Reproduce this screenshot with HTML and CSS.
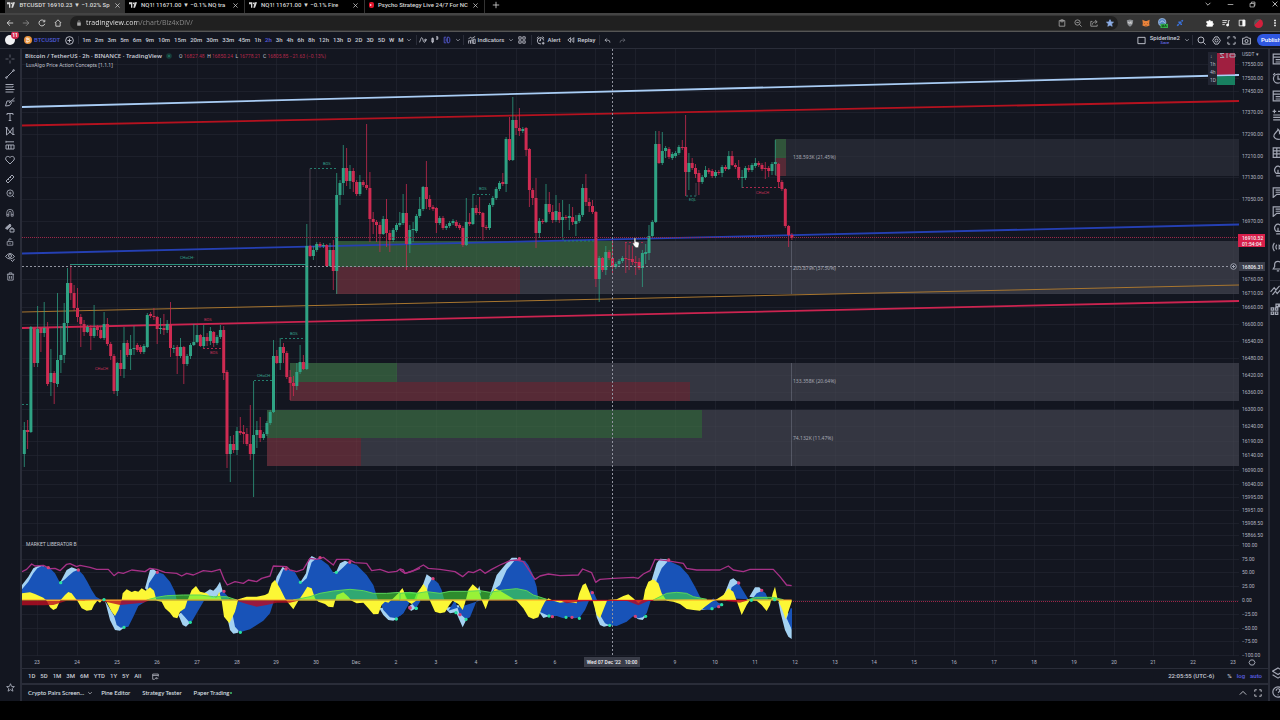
FILE: index.html
```html
<!DOCTYPE html>
<html lang="en">
<head>
<meta charset="utf-8">
<title>BTCUSDT 16910.23 ▼ −1.02% Spiderline2</title>
<link rel="stylesheet" href="styles.css">
</head>
<body>
<svg class="sprite" aria-hidden="true">
  <symbol id="tv" viewBox="0 0 12 10"><path fill="currentColor" stroke="none" d="M0 1h5v8H3V4H0zM8.500 1H12L9 9H6.500z"/><circle cx="7" cy="2.500" r="1.300" fill="currentColor" stroke="none"/></symbol>
  <symbol id="x" viewBox="0 0 10 10"><path d="M2 2l6 6M8 2l-6 6"/></symbol>
  <symbol id="plus" viewBox="0 0 10 10"><path d="M5 1v8M1 5h8"/></symbol>
  <symbol id="back" viewBox="0 0 10 10"><path d="M9 5H1.500M5 1.500L1.500 5 5 8.500"/></symbol>
  <symbol id="fwd" viewBox="0 0 10 10"><path d="M1 5h7.500M5 1.500L8.500 5 5 8.500"/></symbol>
  <symbol id="reload" viewBox="0 0 10 10"><path d="M8.500 6A3.700 3.700 0 1 1 8 2.800M8.500 1v2.500H6"/></symbol>
  <symbol id="home" viewBox="0 0 10 10"><path d="M1 5l4-4 4 4M2.300 4.500V9h5.400V4.500"/></symbol>
  <symbol id="lock" viewBox="0 0 10 10"><path fill="currentColor" d="M2.500 4.500h5V9h-5z"/><path d="M3.500 4V2.500a1.500 1.500 0 0 1 3 0V4"/></symbol>
  <symbol id="chev" viewBox="0 0 10 10"><path d="M2 3.500l3 3 3-3"/></symbol>
  <symbol id="up" viewBox="0 0 10 10"><path d="M1 7l4-4 4 4"/></symbol>
  <symbol id="min" viewBox="0 0 10 10"><path d="M1 5h8"/></symbol>
  <symbol id="restore" viewBox="0 0 10 10"><path d="M1.500 3.500h6v5h-6zM3.500 3.500v-2h5v5h-1"/></symbol>
  <symbol id="clip" viewBox="0 0 10 10"><path d="M1.500 2h7v7h-7zM3.500 1h3v2.500h-3z"/></symbol>
  <symbol id="search" viewBox="0 0 10 10"><circle cx="4.400" cy="4.400" r="3.300"/><path d="M7 7l2.500 2.500"/></symbol>
  <symbol id="zoomout" viewBox="0 0 10 10"><circle cx="4.400" cy="4.400" r="3.300"/><path d="M7 7l2.500 2.500M3 4.400h3"/></symbol>
  <symbol id="share" viewBox="0 0 10 10"><path d="M3 3H1v6h8V7M3 7c0-3 2-3.500 5-3.500M6.500 1.500l2.500 2-2.500 2"/></symbol>
  <symbol id="starfill" viewBox="0 0 10 10"><path fill="currentColor" d="M5 .8l1.200 3 3.100.200-2.400 2 .8 3.100L5 7.400 2.300 9.100l.8-3.100-2.400-2 3.100-.200z"/></symbol>
  <symbol id="star" viewBox="0 0 10 10"><path d="M5 .8l1.200 3 3.100.200-2.400 2 .8 3.100L5 7.400 2.300 9.100l.8-3.100-2.400-2 3.100-.200z"/></symbol>
  <symbol id="shield" viewBox="0 0 10 10"><path fill="#8a8d91" stroke="none" d="M5 .5l4 1.200C9 6 7.500 8.500 5 9.700 2.500 8.500 1 6 1 1.700z"/><path stroke="#ddd" d="M3 3.500v1.500q1 1 2 0V3.500M7 3.500H5.800v2H7V4.500"/></symbol>
  <symbol id="fox" viewBox="0 0 10 10"><path fill="#e8823a" stroke="none" d="M.5 1L4 2.500h2L9.500 1 9 5.500 9.500 8 7 9 5.800 9.500H4.200L3 9 .5 8 1 5.500z"/><path fill="#70402a" stroke="none" d="M2.500 5l1.500.8-1 .6zM7.500 5L6 5.800l1 .6zM4 8h2l-.5 1h-1z"/></symbol>
  <symbol id="globe" viewBox="0 0 12 12"><circle cx="5" cy="5" r="4.500" fill="#5584c4" stroke="#9db9dc"/><path stroke="#c7d8ec" d="M2 6q3-5 6 0"/><path fill="#34b34b" stroke="none" d="M3 7h9v5H3z"/><path stroke="#10431a" d="M5 8v2.500h1.500V8M8 10.800L9 8l1 2.800"/></symbol>
  <symbol id="candy" viewBox="0 0 10 10"><path stroke="#3a73e0" stroke-width="2" d="M1.500 8.500l2-2M4 6l2.500-2.500M7 3l1.500-1.500M3 4h2M5.500 6.500h2"/></symbol>
  <symbol id="puzzle" viewBox="0 0 10 10"><path fill="currentColor" d="M1 3h2.300a1.200 1.200 0 1 1 2.400 0H8v2.200a1.200 1.200 0 1 1 0 2.400V9H1V7.300a1.200 1.200 0 0 0 0-2.400z"/></symbol>
  <symbol id="media" viewBox="0 0 10 10"><path d="M.5 2h6M.5 4.500h5M.5 7h3M8 7.500V2h1.700"/><circle cx="7" cy="7.600" r="1.300" fill="currentColor"/></symbol>
  <symbol id="side" viewBox="0 0 10 10"><path d="M1.500 1.500h7v7h-7z"/><path fill="currentColor" d="M6 1.500h2.500v7H6z"/></symbol>
  <symbol id="dots" viewBox="0 0 10 10"><path stroke="none" fill="currentColor" d="M4 .8h2v2H4zM4 4h2v2H4zM4 7.200h2v2H4z"/></symbol>
  <symbol id="pluso" viewBox="0 0 10 10"><circle cx="5" cy="5" r="4.300"/><path d="M5 2.800v4.400M2.800 5h4.400"/></symbol>
  <symbol id="wave" viewBox="0 0 10 10"><path d="M.5 8C2 6 2 2 3.500 2S5 8 6.500 8 8 5 9.500 4"/><circle cx="8" cy="5" r="1"/></symbol>
  <symbol id="bars" viewBox="0 0 10 10"><path d="M2 2v7M1 3h2v4.500H1zM7.500.5v4M6.500 1h2v3h-2"/></symbol>
  <symbol id="sq" viewBox="0 0 10 10"><path d="M4 1.500H1.500v7H4M5.500 1.500h2l1 2v3l-1 2h-2zM4 3v4"/></symbol>
  <symbol id="indic" viewBox="0 0 10 10"><path d="M.5 9.500V6H3v3.500M3.500 9.500V5H6v4.500M6.500 9.500V4H9v5.500zM.5 4L3 1.500l2 1.500L9 .5"/></symbol>
  <symbol id="grid" viewBox="0 0 10 10"><path d="M1 1h3v3H1zM6 1h3v3H6zM1 6h3v3H1zM6 6h3v3H6z"/></symbol>
  <symbol id="alarm" viewBox="0 0 10 10"><path d="M8.500 5A3.500 3.500 0 1 0 5.500 8.800M1 2.500L2.800.8M9 2.500L7.200.8M5 3v2.300H3.500M8 6.500v3M6.500 8h3"/></symbol>
  <symbol id="replay" viewBox="0 0 10 10"><path d="M4.500 2v6L1 5zM8.500 2v6L5.500 5z"/></symbol>
  <symbol id="undo" viewBox="0 0 10 10"><path d="M4 2L1.500 4.500 4 7M1.500 4.500h4q3 0 3 3.500"/></symbol>
  <symbol id="redo" viewBox="0 0 10 10"><path d="M6 2l2.500 2.500L6 7M8.500 4.500h-4q-3 0-3 3.500"/></symbol>
  <symbol id="box" viewBox="0 0 10 10"><path d="M1 1.500h8v7H1z"/></symbol>
  <symbol id="gear" viewBox="0 0 10 10"><path d="M3.300 1h3.400L9.300 5 6.700 9H3.300L.7 5z"/><circle cx="5" cy="5" r="1.700"/></symbol>
  <symbol id="full" viewBox="0 0 10 10"><path d="M1 3.500V1h2.500M6.500 1H9v2.500M9 6.500V9H6.500M3.500 9H1V6.500"/></symbol>
  <symbol id="cam" viewBox="0 0 10 10"><path d="M.7 2.500h2l1-1.300h2.600l1 1.300h2V9H.7z"/><circle cx="5" cy="5.600" r="1.700"/></symbol>
  <symbol id="cross" viewBox="0 0 10 10"><path d="M5 .5v3M5 6.500v3M.5 5h3M6.500 5h3"/></symbol>
  <symbol id="line" viewBox="0 0 10 10"><path d="M1.500 8.500l7-7"/><circle cx="1.400" cy="8.600" r=".8"/><circle cx="8.600" cy="1.400" r=".8"/></symbol>
  <symbol id="fib" viewBox="0 0 10 10"><path d="M.5 1.500h8M.5 4h7.500M.5 6.500h9M.5 9h8M8.500 4l-1-1"/></symbol>
  <symbol id="brush" viewBox="0 0 10 10"><path d="M.5 9l1.500-5h3.500l1 2-2 2.500zM4 6l5.500-5M7 4h2.500"/></symbol>
  <symbol id="text" viewBox="0 0 10 10"><path d="M2 3V1.500h6V3M5 1.500v7M3.700 8.500h2.600"/></symbol>
  <symbol id="xabcd" viewBox="0 0 10 10"><path d="M1.500 9V1.500L5 6l3-4.500v7L5 6 1.500 9M.5 1.500h2M7.500 8.500h2"/></symbol>
  <symbol id="pred" viewBox="0 0 10 10"><path d="M1 .8v2M1 1.800h8M1 5h8M1 9h8M1 5v4M3.500 5v4M6 5v4M9 5v4"/></symbol>
  <symbol id="heart" viewBox="0 0 10 10"><path d="M5 9L1 5C-.5 2 3 0 5 2.600 7 0 10.500 2 9 5z"/></symbol>
  <symbol id="ruler" viewBox="0 0 10 10"><path d="M1 7l6-6 2 2-6 6zM3 5l1 1M5 3l1 1"/></symbol>
  <symbol id="zoomin" viewBox="0 0 10 10"><circle cx="4.600" cy="4.600" r="3.600"/><path d="M7 7l2 2M3 4.600h3.200M4.600 3v3.200"/></symbol>
  <symbol id="magnet" viewBox="0 0 10 10"><path d="M1 9V4a4 3.500 0 0 1 8 0v5H6.500V4.500a1.500 1.500 0 0 0-3 0V9zM1 7h2.500M6.500 7H9"/></symbol>
  <symbol id="pen" viewBox="0 0 10 10"><path fill="currentColor" d="M.5 5L5 1l1 2-4 3.500z"/><path d="M5 6h4v3H5zM6 6V5h2v1"/></symbol>
  <symbol id="unlock" viewBox="0 0 10 10"><path d="M1.500 4.500h7V9h-7zM3.500 4.500V2.500a1.500 1.500 0 0 1 3 0M5 6v1.500"/></symbol>
  <symbol id="eye" viewBox="0 0 10 10"><path d="M.5 4.500Q5-1.500 9.500 4.500 5 9.500.5 4.500zM6 8l1.500 1.500L9.500 7"/><circle cx="5" cy="4" r="1.500"/></symbol>
  <symbol id="trash" viewBox="0 0 10 10"><path d="M1 2.500h8M3.500 2.500V1h3v1.500M2 2.500V9h6V2.500M4 4.500v3M6 4.500v3"/></symbol>
  <symbol id="list" viewBox="0 0 10 10"><path d="M1 1h8v8H1zM1 3.500h8M3 5.500h5M3 7.500h5"/></symbol>
  <symbol id="clock" viewBox="0 0 10 10"><circle cx="5" cy="5.500" r="3.800"/><path d="M5 3v3h2M1 2.500L2.500 1M9 2.500L7.500 1"/></symbol>
  <symbol id="stack" viewBox="0 0 10 10"><path d="M2 .5v3M.5 2h3M5 2h5M1 5h9M1 7h9M1 9h9"/></symbol>
  <symbol id="fire" viewBox="0 0 10 10"><path d="M5 1C5 3 1.500 4 1.500 7q1 2.500 4 2.500T9 6.500Q9 4 7 3q0 1-.7 1.500Q6.500 2 5 1z"/></symbol>
  <symbol id="cal" viewBox="0 0 10 10"><path d="M1 1.500h9V9.500H1zM1 4h9M1 6.500h9M4 1.500v8M7 1.500v8"/></symbol>
  <symbol id="goto" viewBox="0 0 10 10"><path d="M4 9H1V1.500h8V5M1 3.500h8M9 7.500H5M6.500 6L5 7.500 6.500 9"/></symbol>
  <symbol id="bulb" viewBox="0 0 10 10"><path d="M3.500 7Q1 4.500 3 2T8 3Q8.500 5 7 7zM3.500 9h3.500M5 4v3"/></symbol>
  <symbol id="chat" viewBox="0 0 10 10"><path d="M1 1.500h8.500V7H4L1 9.500zM3 3.500h4.500M3 5.200h4.500"/></symbol>
  <symbol id="cast" viewBox="0 0 10 10"><path d="M2 1.500q-2.500 3.500 0 7M4 3q-1.500 2 0 4M6 3.500L9 5 6 6.500z"/></symbol>
  <symbol id="bell" viewBox="0 0 10 10"><path d="M1 7.500l1.200-2V4a2.800 2.800 0 0 1 5.600 0v1.500l1.200 2zM4 9h2"/></symbol>
  <symbol id="zig" viewBox="0 0 10 10"><path d="M.5 6.500L3.500 3l1.500 2L8 1.500M2 9l2.500-3 1.500 2L9 4.500"/></symbol>
  <symbol id="dom" viewBox="0 0 10 10"><path d="M5 1h2v2H5zM1 4h2v2H1zM4.500 4h2v2h-2zM1 7.500h2v2H1zM4.500 7.500h2v2h-2zM8 .5v3"/></symbol>
  <symbol id="layers" viewBox="0 0 10 10"><path d="M5 .8l4.500 2.700L5 6.200.5 3.500zM.5 6.500L5 9.300l4.500-2.800"/></symbol>
  <symbol id="help" viewBox="0 0 10 10"><circle cx="5" cy="5" r="4.300"/><path d="M3.500 4q0-1.700 1.500-1.700T6.500 4Q6 5 5 5.500M5 7v.8"/></symbol>
</svg>

<nav class="tabs" aria-label="Browser tabs">
  <button class="tab on"><svg class="i8"><use href="#tv"/></svg><span>BTCUSDT 16910.23 ▼ −1.02% Sp</span><svg class="i7"><use href="#x"/></svg></button>
  <button class="tab"><svg class="i8"><use href="#tv"/></svg><span>NQ1! 11671.00 ▼ −0.1% NQ tra</span><svg class="i7"><use href="#x"/></svg></button>
  <button class="tab"><svg class="i8"><use href="#tv"/></svg><span>NQ1! 11671.00 ▼ −0.1% Fire</span><svg class="i7"><use href="#x"/></svg></button>
  <button class="tab"><i class="yt"></i><span>Psycho Strategy Live 24/7 For NC</span><svg class="i7"><use href="#x"/></svg></button>
  <button class="new" aria-label="New tab"><svg class="i8"><use href="#plus"/></svg></button>
  <div class="window">
    <button aria-label="Search tabs"><svg class="i8"><use href="#chev"/></svg></button>
    <button aria-label="Minimize"><svg class="i7"><use href="#min"/></svg></button>
    <button aria-label="Restore"><svg class="i7"><use href="#restore"/></svg></button>
    <button aria-label="Close"><svg class="i8"><use href="#x"/></svg></button>
  </div>
</nav>

<div class="browserbar">
  <button aria-label="Back"><svg class="i8"><use href="#back"/></svg></button>
  <button class="dim" aria-label="Forward"><svg class="i8"><use href="#fwd"/></svg></button>
  <button aria-label="Reload"><svg class="i8"><use href="#reload"/></svg></button>
  <button aria-label="Home"><svg class="i8"><use href="#home"/></svg></button>
  <div class="address">
    <svg class="i6"><use href="#lock"/></svg>
    <input aria-label="Address" value="tradingview.com/chart/Blz4xDiV/">
    <button aria-label="Clipboard"><svg class="i8"><use href="#clip"/></svg></button>
    <button aria-label="Zoom"><svg class="i8"><use href="#zoomout"/></svg></button>
    <button aria-label="Share"><svg class="i8"><use href="#share"/></svg></button>
    <button class="fav" aria-label="Bookmark"><svg class="i8"><use href="#starfill"/></svg></button>
  </div>
  <div class="ext">
    <svg class="i8"><use href="#shield"/></svg><svg class="i8"><use href="#fox"/></svg><svg class="i10"><use href="#globe"/></svg><svg class="i8"><use href="#candy"/></svg>
  </div>
  <div class="ext white">
    <svg class="i8"><use href="#puzzle"/></svg><svg class="i8"><use href="#media"/></svg><svg class="i8"><use href="#side"/></svg><i class="me"></i><svg class="i8"><use href="#dots"/></svg>
  </div>
</div>

<header class="top">
  <button class="avatar" aria-label="Account"><b>11</b></button>
  <button class="symbol"><i>₿</i>BTCUSDT</button>
  <button aria-label="Compare"><svg class="i9"><use href="#pluso"/></svg></button>
  <div class="times">
    <button>1m</button><button>2m</button><button>3m</button><button>5m</button><button>6m</button><button>9m</button><button>10m</button><button>15m</button><button>20m</button><button>30m</button><button>33m</button><button>45m</button><button>1h</button><button class="blue">2h</button><button>3h</button><button>4h</button><button>6h</button><button>8h</button><button>12h</button><button>13h</button><button>D</button><button>2D</button><button>3D</button><button>5D</button><button>W</button><button>M</button><button aria-label="More intervals"><svg class="i6"><use href="#chev"/></svg></button>
  </div>
  <div class="group styles">
    <button aria-label="Line"><svg class="i8"><use href="#wave"/></svg></button><button aria-label="Candles"><svg class="i8"><use href="#bars"/></svg></button><button class="blue" aria-label="Hollow"><svg class="i8"><use href="#sq"/></svg></button><button aria-label="More styles"><svg class="i6"><use href="#chev"/></svg></button>
  </div>
  <div class="group indicators">
    <button><svg class="i8"><use href="#indic"/></svg>Indicators</button><button aria-label="Favorites"><svg class="i6"><use href="#chev"/></svg></button><button aria-label="Templates"><svg class="i8"><use href="#grid"/></svg></button>
  </div>
  <div class="group alerts">
    <button><svg class="i9"><use href="#alarm"/></svg>Alert</button><button><svg class="i8"><use href="#replay"/></svg>Replay</button>
  </div>
  <div class="group history">
    <button aria-label="Undo"><svg class="i7"><use href="#undo"/></svg></button><button class="dim" aria-label="Redo"><svg class="i7"><use href="#redo"/></svg></button>
  </div>
  <div class="right">
    <button aria-label="Layout"><svg class="i9"><use href="#box"/></svg></button>
    <button class="save"><b>Spiderline2</b><small>Save</small></button>
    <button aria-label="Layouts"><svg class="i6"><use href="#chev"/></svg></button>
  </div>
  <div class="group tools">
    <button aria-label="Search"><svg class="i9"><use href="#search"/></svg></button><button aria-label="Settings"><svg class="i9"><use href="#gear"/></svg></button><button aria-label="Fullscreen"><svg class="i9"><use href="#full"/></svg></button><button aria-label="Snapshot"><svg class="i9"><use href="#cam"/></svg></button>
  </div>
  <button class="publish">Publish</button>
</header>

<main>
  <aside class="draw" aria-label="Drawing tools">
    <div class="set eight"><button aria-label="Cursor"><svg class="i10 dim"><use href="#cross"/></svg></button><button aria-label="Trend line"><svg class="i10"><use href="#line"/></svg></button><button aria-label="Fib"><svg class="i10"><use href="#fib"/></svg></button><button aria-label="Brush"><svg class="i10"><use href="#brush"/></svg></button><button aria-label="Text"><svg class="i10"><use href="#text"/></svg></button><button aria-label="Patterns"><svg class="i10"><use href="#xabcd"/></svg></button><button aria-label="Forecast"><svg class="i10"><use href="#pred"/></svg></button><button aria-label="Icons"><svg class="i10"><use href="#heart"/></svg></button></div>
    <div class="set two"><button aria-label="Measure"><svg class="i10"><use href="#ruler"/></svg></button><button aria-label="Zoom in"><svg class="i9"><use href="#zoomin"/></svg></button></div>
    <div class="set four"><button aria-label="Magnet"><svg class="i8"><use href="#magnet"/></svg></button><button aria-label="Stay in drawing mode"><svg class="i10"><use href="#pen"/></svg></button><button aria-label="Lock"><svg class="i8"><use href="#unlock"/></svg></button><button aria-label="Hide"><svg class="i10"><use href="#eye"/></svg></button></div>
    <div class="set"><button aria-label="Delete"><svg class="i9"><use href="#trash"/></svg></button></div>
    <button class="foot" aria-label="Favorites"><svg class="i9"><use href="#star"/></svg></button>
  </aside>

  <section class="center">
    <svg class="chart" viewBox="22 49 1246 619" preserveAspectRatio="xMinYMin meet" role="img" aria-label="Bitcoin price chart">
      <g id="gridlines" class="gridlines"></g>
      <g class="zones">
        <path class="za" d="M775 139h464v37H775z"/><path class="zg" d="M336 241h276v26H336zM290 363h107v19H290zM267 410h435v28H267zM775 139h11v19h-11z"/>
        <path class="zb" d="M612 241h627v53H520v-27h92zM397 363h842v38H690v-19H397zM702 410h537v56H361v-28h341z"/>
        <path class="zr" d="M336 267h184v27H336zM290 382h400v19H290zM267 438h94v28h-94zM775 158h11v18h-11z"/>
        <path class="zl" d="M791.500 241v53M791.500 363v38M791.500 410v56"/>
      </g>
      <g id="gridover" class="gridover"></g>
      <g class="lines">
        <path stroke="#a9cdf5" d="M22 107L1239 75"/>
        <path stroke="#b5121f" d="M22 125.500L1239 101"/>
        <path stroke="#2540b4" d="M22 253.500L1239 224.500"/>
        <path class="fine" stroke="#a8762f" d="M22 312L1239 285"/>
        <path stroke="#cc2450" d="M22 328L1239 301"/>
        <path class="fine" stroke="#2a8f7d" d="M70 264.500H306"/>
      </g>
      <g class="dash">
        <path class="g" d="M310 168.500h27M473 194.500h17M254 380.500h18M281 338.500h22M563 238v3h32M686 196h11M22 404.500h6"/>
        <path class="r" d="M742 187.500h40M203 348.500h20M625 242.500h20"/>
        <path class="thin" d="M310 168.500V246M686 147v49M696 183v13"/>
      </g>
      <g id="candles"></g>
      <g class="tags"><text x="180" y="259" class="g">CHoCH-</text><text x="257" y="377" class="g">CHoCH</text><text x="290" y="335" class="g">BOS</text><text x="323" y="165" class="g">BOS</text><text x="479" y="190" class="g">BOS</text><text x="689" y="201" class="g">EQL</text><text x="204" y="321" class="r">BOS</text><text x="210" y="354" class="r">BOS</text><text x="95" y="370" class="r">CHoCH</text><text x="756" y="194" class="r">CHoCH</text></g>
      <path class="now" d="M22 237.500H1239M791 601.500H1239"/>
      <g class="vol"><text x="793" y="159">138.593K (21.45%)</text><text x="793" y="270">203.879K (37.50%)</text><text x="793" y="383">133.358K (20.64%)</text><text x="793" y="440">74.132K (11.47%)</text></g>

      <g transform="translate(0 530) scale(.33333)" class="osc">
        <path class="lb" d="M66 210V165L85 140 100 115 115 107 130 108 180 158 200 120 215 112 237 120 270 210zM315 212L330 270 345 300 360 302 374 292 350 270zM435 175L450 120 460 117 472 127 470 210zM535 255L548 285 558 290 572 277 550 240zM612 190L630 178 640 182 650 172 660 155 670 190V210H612zM678 245L690 300 700 311 714 308 720 290 712 230zM815 190L830 140 848 110 860 120 900 158 918 130 925 90 935 78 948 85 960 130 1008 127 1020 100 1035 92 1050 98 1000 200H815zM1138 235L1150 255 1165 270 1180 272 1192 265 1160 230zM1225 230L1233 243 1248 235 1240 220z"/>
        <path class="db" d="M66 210V178L85 155 100 130 112 115 125 108 150 115 165 130 180 158 195 148 205 138 220 125 235 119 250 135 262 155 275 180 288 200 305 210zM320 212L340 250 350 285 362 293 385 290 400 260 415 228 440 212zM437 210L447 160 470 125 490 132 510 155 525 185 530 210zM555 212L540 245 555 262 568 277 577 272 590 250 612 212zM640 210L655 192 668 183 680 195 690 210zM715 213L698 255 705 290 720 307 750 298 790 272 810 250 822 212zM820 210L835 155 850 118 870 120 885 127 895 145 905 158 920 145 935 97 950 85 965 90 985 105 1000 128 1010 130 1030 112 1045 97 1070 105 1100 135 1120 165 1134 210zM1140 212L1150 240 1170 262 1190 265 1210 250 1228 212zM1228 212L1248 235 1262 212z"/>
        <path class="y" d="M66 210V190L90 187 105 192 130 203 140 212 150 232 160 240 170 235 180 212 195 195 205 186 215 190 225 203 232 212 245 235 260 242 275 240 282 225 292 212 300 218 310 206 318 212 335 245 345 258 355 240 365 210 368 190 380 178 395 186 405 182 415 185 425 175 437 182 450 172 462 182 470 212 485 215 495 235 510 248 520 262 532 265 540 245 555 235 562 212 575 180 588 168 600 185 620 190 635 205 650 202 658 185 665 212 672 260 688 280 705 245 715 208 740 200 770 200 795 195 805 190 815 160 825 150 840 175 855 205 862 215 880 238 895 212 910 190 922 170 935 175 945 205 955 215 975 222 985 230 1000 232 1010 195 1030 187 1045 200 1055 212 1070 220 1090 218 1105 235 1120 253 1135 252 1145 225 1155 215 1165 218 1180 205 1195 190 1207 175 1218 200 1230 220 1240 215 1250 190 1260 178V210z"/>
        <path class="gr" d="M440 210L470 202 500 197 550 195 600 195 640 200 680 200 710 210zM880 210L930 200 960 190 1000 183 1050 178 1090 182 1120 190 1160 190 1200 187 1260 190V210z"/>
        <path class="rd" d="M66 212V226H130L160 225 200 212 250 210 300 212 330 218 360 225 430 218 450 211zM710 212L740 222 770 230 800 225 830 218 870 218 900 211z"/>
        <path class="zero" d="M66 210H1260"/>
        <path class="pu" d="M66 125L80 118 95 102 105 108 130 106 150 116 165 115 180 122 200 103 210 101 230 110 240 106 270 112 290 118 325 118 342 137 355 127 370 130 395 120 435 125 450 115 470 118 495 127 530 130 545 138 560 130 580 135 610 122 635 125 660 118 672 148 682 165 705 155 730 160 745 150 770 155 785 145 810 138 820 108 860 110 870 120 890 125 910 118 930 85 950 88 970 82 1000 105 1010 88 1045 88 1065 98 1100 100 1115 122 1140 118 1165 127 1190 124 1200 117 1210 120 1215 130 1230 126 1260 115"/>
        <path class="dg" d="M182 158h.1M372 292h.1M571 277h.1M721 307h.1M901 157h.1M1009 127h.1M1189 267h.1M1249 235h.1M312 209h.1"/>
        <path class="dr" d="M145 113h.1M235 120h.1M472 127h.1M672 184h.1M858 117h.1M960 83h.1M1049 97h.1M1230 234h.1"/>
      </g>
      <g transform="translate(400 530) scale(.33333)" class="osc">
        <path class="lb" d="M65 175L80 133 97 145 95 210H60zM135 235L150 250 168 247 188 292 200 267 175 225zM228 190L238 168 243 190zM268 200L278 170 290 135 315 105 335 83 350 83 360 100 330 150 300 210zM415 235L420 250 430 264 449 258 440 230zM585 235L590 262 600 285 612 290 630 286 610 240zM750 210L755 150 770 100 780 86 800 88 810 110 790 200zM700 258L715 268 728 270 738 258zM900 225L905 240 938 235zM970 200L990 150 1000 145 1017 158 1000 200zM1048 200L1065 172 1078 172 1087 182 1070 205zM1135 215L1142 250 1155 300 1165 320 1175 327V290L1160 230z"/>
        <path class="db" d="M0 212V258L10 250 25 225 30 212zM75 210L85 165 97 145 115 160 125 180 133 210zM145 242L165 210 178 250 198 267 210 262 225 225 240 185 245 210zM265 210L280 180 300 165 320 120 345 90 375 92 385 105 397 130 410 170 415 210zM430 212L418 245 447 258 470 258 490 265 500 260 525 265 540 262 555 240 567 212zM565 210L572 180 583 192 592 212zM620 212L600 255 615 280 628 286 650 288 680 275 700 258 715 265 728 262 740 250 752 212zM760 210L770 150 785 115 805 92 840 108 865 135 885 170 900 200 905 210zM905 238L940 205 955 218 970 224 930 240zM985 205L995 172 1015 158 1025 175 1045 208zM1055 210L1070 190 1087 182 1097 190 1105 210zM1160 265L1172 235 1176 235V300z"/>
        <path class="y" d="M0 210V185L8 175 20 212 35 222 48 212 58 180 70 162 80 175 90 212 105 245 120 250 135 247 148 225 158 212 175 222 188 240 195 220 205 180 218 163 235 178 245 210 257 238 270 200 285 175 300 182 330 200 350 212 370 235 385 260 400 267 415 262 425 235 435 215 445 205 460 212 480 218 500 215 530 220 538 190 548 165 557 160 568 185 578 212 590 255 600 265 612 235 622 210 650 208 670 198 685 193 700 205 715 220 730 208 735 180 745 155 760 148 775 160 785 190 800 212 820 215 840 222 860 237 880 240 900 242 915 230 935 215 950 208 970 195 985 175 1000 185 1010 212 1025 255 1040 225 1050 210 1070 212 1085 225 1100 243 1110 225 1118 190 1125 170 1132 205 1145 235 1157 268 1165 245 1175 215V210z"/>
        <path class="gr" d="M0 210V190L30 187 50 190 80 185 120 190 150 184 200 184 240 182 270 187 310 180 350 176 380 182 400 195 440 208zM760 210L780 200 800 190 830 187 860 190 880 200 920 208zM1040 210L1070 202 1120 202 1150 209z"/>
        <path class="rd" d="M430 211H480L500 220 550 214 680 212 715 226 750 211zM960 211L1020 218 1045 211z"/>
        <path class="zero" d="M0 210H440M760 210H980M1040 210H1175"/><path class="zero red" d="M440 211H760M980 211H1040"/>
        <path class="pu" d="M0 120L15 130 40 122 70 105 85 115 120 118 165 125 188 140 205 125 220 128 240 118 255 130 275 118 300 105 330 92 350 90 370 95 390 125 405 148 420 138 445 132 480 137 535 135 548 117 575 128 587 157 600 148 640 145 700 142 715 145 730 132 750 122 765 88 800 92 850 100 860 115 890 120 960 120 985 108 1000 120 1030 125 1050 118 1120 118 1140 140 1160 165 1175 167"/>
        <path class="dg" d="M48 235h.1M168 248h.1M198 268h.1M447 258h.1M498 262h.1M538 265h.1M629 286h.1M737 259h.1M936 236h.1M965 224h.1M1054 211h.1M1124 209h.1"/>
        <path class="dr" d="M30 233h.1M99 146h.1M180 254h.1M358 86h.1M457 260h.1M516 262h.1M577 188h.1M706 259h.1M806 90h.1M956 230h.1M1016 159h.1M1085 181h.1"/>
      </g>

      <path class="hair" d="M22 266.500H1230M612.500 49V656"/>
      <g class="legend">
        <text x="25" y="58" class="ttl">Bitcoin / TetherUS · 2h · BINANCE · TradingView</text>
        <circle cx="169" cy="56" r="1.800"/>
        <text x="179" y="58" class="ohlc">O <tspan>16827.48</tspan>&#160; H <tspan>16850.24</tspan>&#160; L <tspan>16778.21</tspan>&#160; C <tspan>16805.85 −21.63 (−0.13%)</tspan></text>
        <text x="26" y="67" class="sub">LuxAlgo Price Action Concepts [1.1.1]</text>
        <text x="26" y="546" class="mk">MARKET LIBERATOR B</text>
      </g>
      <g class="mini"><path fill="#222532" d="M1208 52h9v33h-9z"/><path fill="#a01f40" d="M1217 53h18v22h-18z"/><path fill="#188060" d="M1217 76h18v9h-18z"/><path d="M1217 75.500L1239 75" stroke="#a9cdf5" stroke-width="1.500"/><text x="1210" y="58">↓</text><text x="1210" y="66">1h</text><text x="1210" y="74">4h</text><text x="1210" y="82">1D</text><path class="ic" d="M1220 53.500h4M1220 57.500h4M1220 53.500l4 4M1230 57v-3h5v3zM1227 53v5"/></g>
      <g id="prices" class="axis"></g>
      <text x="1242" y="56" class="cur">USDT ▾</text>
      <path fill="#d81f4a" d="M1238 234h27v13h-27z"/><text class="flag" x="1242" y="240">16910.52</text><text class="flag" x="1242" y="246">01:54:04</text>
      <path fill="#3a3d49" d="M1239 262h26v9h-26z"/><text class="flag" x="1242" y="269">16806.31</text>
      <g class="ic"><circle cx="1233.500" cy="266.500" r="2.800" fill="#222532"/><path d="M1232 266.500h3M1233.500 265v3"/><path d="M1250.500 660h3l1.500 2.500-1.500 2.500h-3l-1.500-2.500z"/></g>
      <g id="days" class="axis mid"></g>
      <path fill="#3a3d49" d="M584 657h56v10h-56z"/><text class="flag mid" x="612" y="664">Wed 07 Dec '22&#160;&#160; 10:00</text>
      <path class="hand" d="M634.500 246.500l-2-3q.5-1.200 1.600-.2v-5q.9-1.300 1.700 0v3.200l2.900.8q.7.500.3 2.200l-.6 3q-2.500 1-3.900-1z"/>
    </svg>

    <div class="range">
      <button>1D</button><button>5D</button><button>1M</button><button>3M</button><button>6M</button><button>YTD</button><button>1Y</button><button>5Y</button><button>All</button>
      <button class="goto" aria-label="Go to date"><svg class="i7"><use href="#goto"/></svg></button>
      <button class="utc">22:05:55 (UTC-6)</button>
      <button class="pct">%</button><button class="blue">log</button><button class="blue">auto</button>
    </div>
    <div class="panels">
      <button>Crypto Pairs Screen...</button><button class="pc" aria-label="Screeners"><svg class="i6"><use href="#chev"/></svg></button><button>Pine Editor</button><button>Strategy Tester</button><button>Paper Trading<i></i></button>
      <button class="end" aria-label="Open panel"><svg class="i8"><use href="#up"/></svg></button><button class="mx" aria-label="Maximize"><svg class="i8"><use href="#full"/></svg></button>
    </div>
  </section>

  <aside class="widgets" aria-label="Widgets">
    <div class="rows"><svg class="i12"><use href="#list"/></svg><svg class="i12"><use href="#clock"/></svg><svg class="i12"><use href="#list"/></svg><svg class="i12"><use href="#stack"/></svg><svg class="i12"><use href="#fire"/></svg><svg class="i12"><use href="#cal"/></svg><svg class="i12"><use href="#bulb"/></svg></div>
    <div class="rows b"><svg class="i12"><use href="#chat"/></svg><svg class="i12"><use href="#chat"/></svg><svg class="i12"><use href="#bulb"/></svg><svg class="i12"><use href="#cast"/></svg><svg class="i12"><use href="#bell"/></svg></div>
    <div class="rows c"><svg class="i12"><use href="#zig"/></svg><svg class="i12"><use href="#dom"/></svg></div>
    <div class="rows end"><svg class="i12"><use href="#layers"/></svg><svg class="i12"><use href="#help"/></svg></div>
  </aside>
</main>
<script src="chart.js"></script>
</body>
</html>
```
FILE: styles.css
```css
* { box-sizing: border-box; }
body { margin: 0; height: 100vh; display: flex; flex-direction: column; background: #000; color: #c9ccd6; font: 500 6px/8px Roboto, sans-serif; overflow: hidden; padding-bottom: 19px; }
button { all: unset; display: inline-flex; align-items: center; justify-content: center; white-space: nowrap; cursor: pointer; flex: none; }
svg { flex: none; }
.sprite { position: absolute; width: 0; height: 0; }
symbol { fill: none; stroke: currentColor; }
.i6, .i7, .i8, .i9, .i10, .i12 { fill: none; stroke: currentColor; }
.i6 { width: 6px; height: 6px; }
.i7 { width: 7px; height: 7px; }
.i8 { width: 8px; height: 8px; }
.i9 { width: 9px; height: 9px; }
.i10 { width: 10px; height: 10px; }
.i12 { width: 12px; height: 12px; }
.dim { opacity: .5; }
.blue { color: #5a5fe0; }

.tabs { display: flex; height: 13px; flex: none; padding-left: 5px; color: #dadada; }
.tab { width: 120px; padding: 0 5px 3px 4px; gap: 4px; border-right: 1px solid #333; box-sizing: border-box; }
.tab.on { background: #353535; }
.tab span { flex: 1; }
.yt { width: 8px; height: 6px; border-radius: 2px; background: #e3142c; display: grid; place-items: center; }
.yt::after { content: ""; border: 1px solid transparent; border-left: 2px solid #fff; margin-left: 1px; }
.new { padding: 0 7px 3px; }
.window { margin-left: auto; display: flex; gap: 15px; padding: 0 1px 5px 0; }

.browserbar { display: flex; align-items: center; height: 19px; flex: none; background: #353535; border-top: 2px solid #444; border-bottom: 1px solid #555; padding: 0 1px 0 6px; gap: 8px; color: #e8e8e8; }
.address { flex: 1; display: flex; align-items: center; gap: 8px; height: 14px; background: #202020; border-radius: 7px; padding: 0 4px 0 6px; color: #aaa; }
.address svg.i6 { margin-right: -4px; }
.address input { flex: 1; min-width: 0; border: 0; outline: 0; padding: 0; font: 7px/10px "Open Sans", sans-serif; color: transparent; background: linear-gradient(90deg, #f2f2f2 52px, #8e8e8e 52px); -webkit-background-clip: text; background-clip: text; }
.address .fav { color: #8fb0e8; }
.ext { display: flex; align-items: center; gap: 8px; }
.ext.white { margin-left: 14px; color: #fff; }
.me { width: 9px; height: 9px; border-radius: 50%; background: linear-gradient(135deg, #555 35%, #d3203c 35%); }

.top { display: flex; align-items: center; height: 17px; flex: none; background: #131620; border-bottom: 1px solid #2a2d39; padding-left: 5px; overflow: hidden; }
.avatar { position: relative; width: 10px; height: 10px; border-radius: 50%; background: #f2f2f4; margin-right: 9px; }
.avatar b { position: absolute; left: 6px; top: -4px; width: 8px; height: 8px; border-radius: 50%; background: #d5294d; color: #fff; font-size: 5px; text-align: center; }
.symbol { color: #4c5ad8; gap: 2px; margin-right: 5px; }
.symbol i { width: 8px; height: 8px; border-radius: 50%; background: #e8923a; color: #fff; font-style: normal; text-align: center; }
.times { display: flex; border-left: 1px solid #2a2d39; margin-left: 4px; padding: 0 4px 0 3px; gap: 4px; }
.times button:last-child { margin-left: -2px; }
.group { display: flex; align-items: center; border-left: 1px solid #2a2d39; padding: 0 4px; height: 10px; }
.group button { gap: 2px; }
.styles { gap: 4px; padding: 0 2px; }
.indicators { gap: 4px; padding: 0 5px 0 4px; }
.alerts { gap: 7px; padding: 0 4px; }
.history { gap: 8px; }
.right { margin-left: auto; display: flex; align-items: center; gap: 4px; padding-right: 2px; }
.save { flex-direction: column; line-height: 6px; }
.save b { font-weight: 500; }
.save small { font-size: 4px; line-height: 4px; color: #6468e6; }
.tools { gap: 6px; padding: 0 6px 0 4px; }
.publish { width: 23px; height: 12px; box-sizing: border-box; background: #2f57e0; color: #fff; border-radius: 6px 0 0 6px; justify-content: flex-start; padding-left: 4px; overflow: hidden; }

main { flex: 1; min-height: 0; display: grid; grid-template-columns: 22px minmax(0, 1fr) 12px; background: #131620; }
.draw { display: flex; flex-direction: column; gap: 5px; border-right: 2px solid #2a2d39; padding: 3px 0 9px; color: #a3a7b4; }
.set { display: grid; grid-auto-rows: 1fr; min-height: 14px; }
.eight { height: 115px; }
.two { height: 29px; }
.four { height: 58px; }
.foot { margin-top: auto; }
.center { display: flex; flex-direction: column; min-width: 0; min-height: 0; }
.chart { flex: 1; min-height: 0; width: 100%; display: block; font: 5px Roboto, sans-serif; }
.range, .panels { display: flex; align-items: center; flex: none; }
.range { height: 17px; border-top: 1px solid #2a2d39; border-bottom: 2px solid #2a2d39; padding: 0 6px; gap: 5px; }
.goto { margin-left: 6px; }
.utc { margin-left: auto; }
.pct { margin-left: 8px; }
.panels { height: 16px; padding: 0 6px; font-family: Lato, sans-serif; color: #dfe1e8; }
.panels button + button { margin-left: 12px; }
.panels button.pc { margin: 0 -4px 0 3px; }
.panels i { width: 2px; height: 2px; border-radius: 50%; background: #45c06a; margin-left: 1px; }
.panels button.end { margin-left: auto; }
.panels button.mx { margin-left: 7px; }
.widgets { display: flex; flex-direction: column; border-left: 2px solid #2a2d39; overflow: hidden; padding: 1px 0 0 2px; color: #a3a7b4; }
.rows { display: grid; height: 130px; align-items: center; grid-auto-rows: 1fr; }
.rows.b { height: 92px; margin-top: 3px; }
.rows.c { height: 38px; margin: 5px 0 0 -2px; border-top: 1px solid #2a2d39; }
.rows.end { height: 38px; margin-top: auto; }

.gridlines path, .gridover path { stroke: #191c27; fill: none; }
.gridover path { stroke: #fff; opacity: .02; }
.za { fill: #242732; }
.zb { fill: #343641; }
.zg { fill: #30543a; }
.zr { fill: #562a36; }
.zl { stroke: #545764; fill: none; stroke-width: 1; }
.lines path { fill: none; stroke-width: 1.800; }
.lines .fine { stroke-width: 1; }
.dash path { fill: none; stroke-width: 1; stroke-dasharray: 2 2; }
.dash .g { stroke: #237e6e; }
.dash .r { stroke: #a8284c; }
.dash .thin { stroke: #4d3f4c; stroke-dasharray: none; }
.up { stroke: #2fa384; }
.down { stroke: #cf2b52; }
.up, .down { fill: none; }
.wick { stroke-width: 1; opacity: .75; }
.stick { stroke-width: 3; }
.tags text { font-size: 4px; }
.tags .g { fill: #35a38d; }
.tags .r { fill: #c73258; }
.now { stroke: #9c2748; stroke-width: 1; stroke-dasharray: 1 1; fill: none; }
.vol text { fill: #a6a8b2; font-family: "Noto Sans", sans-serif; }
.lb { fill: #a4d2f2; }
.db { fill: #1853b8; }
.y { fill: #fcf735; }
.gr { fill: #46ef38; fill-opacity: .55; stroke: #58d659; stroke-width: 3; }
.rd { fill: #b90d22; fill-opacity: .8; }
.osc path { stroke-linejoin: round; }
.zero { stroke: #ffa025; stroke-width: 3; fill: none; }
.zero.red { stroke: #d31528; }
.pu { fill: none; stroke: #a63187; stroke-width: 4; }
.dg, .dr { stroke-width: 10; stroke-linecap: round; }
.dg { stroke: #29e0a1; }
.dr { stroke: #d3417c; }
.hair { stroke: #9194a0; stroke-width: 1; stroke-dasharray: 2 2; fill: none; }
.legend text { fill: #c5c8d3; }
.legend circle { fill: #26a483; stroke: #173f3b; stroke-width: 2; }
.legend .ttl { font: 600 6px "Noto Sans", sans-serif; }
.legend .ohlc { font-size: 5px; }
.legend tspan { fill: #b3284b; }
.legend .sub { font: 5px "Noto Sans", sans-serif; }
.mini text { font-size: 5px; fill: #b6b9c5; }
.ic { stroke: #a3a7b4; fill: none; stroke-width: 1; }
.axis text, .cur { fill: #b4b7c3; }
.flag { fill: #f0f1f5; font-weight: 500; }
.mid { text-anchor: middle; }
.hand { fill: #fff; stroke: #222; stroke-width: .5; }
```
FILE: chart.js
```js
// Two-hour candles, one step of 3.323 units each: open, close [, high, low] as vertical positions.
const candles = `454,430,422,467 430,432,420,449 432,327,326,433 328,363,327,367 363,329,306,367 328,333,327,352 333,328,302,337 328,384,322,386 382,373,349,396 373,383,371,404
384,360,293,387 360,355,326,373 355,323,303,363 323,283,268,342 283,293,265,300 293,308,285,311 308,317,288,322 317,324,314,347 324,332,320,336 332,327,325,333
328,336,325,350 336,328,305,338 327,330,325,336 330,338,326,339 338,324,312,340 324,344,318,346 344,356,342,360 356,391,354,394 391,363,362,396 363,369,350,376
369,343,327,378 343,355,340,357 355,349,335,370 349,348,326,355 345,350,343,352 347,352 352,346 347,315,313,348 314,316 316,317,308,320
317,329,316,344 329,328,318,334 328,330,314,335 330,324,320,333 324,348,302,357 349,348,345,353 347,356,345,374 356,347,338,358 347,364,346,384 364,356
356,345,343,359 345,342,324,346 342,335,325,343 335,346,334,347 346,337,325,348 337,341,333,346 341,331,327,345 332,343,331,347 343,337 337,330,325,339
330,373,326,380 372,454,370,468 454,444,436,482 444,450,435,453 450,431,427,455 431,433,417,435 432,434,425,444 434,444,428,446 444,454,405,460 454,435,381,497
435,430,421,448 430,438,417,442 438,434 434,423 423,412 412,356,340,413 356,363,350,364 363,347,338,370 347,353,343,363 353,377,351,379
377,383,370,400 383,386,376,396 386,372,363,390 372,362,345,374 362,369,355,370 369,246,224,370 246,256,245,257 256,250,246,260 250,244 244,246
246,245 245,266,244,267 266,250,243,267 250,271,240,290 271,195,173,294 195,183,180,205 183,168,145,195 168,181,148,186 181,171,165,189 171,182,168,192
182,194 194,182,175,196 182,185 185,188,124,190 188,219,172,242 219,222,212,234 222,225,220,242 225,234,222,252 234,219,216,235 219,233,199,247
233,240,230,252 240,230 230,225 225,223,212,227 223,213,194,225 213,244,184,270 244,230,225,253 230,229,222,242 231,216 216,209,197,218
209,187,186,211 187,199,161,209 199,207,195,210 207,209 208,223,207,233 223,218 218,228 228,226 226,223 223,221
222,226 225,228 228,245,226,247 245,222,198,246 222,224,213,226 224,208,194,225 208,213,205,215 212,213,197,215 213,227,212,240 227,228
228,205 205,198 198,189 189,183 182,184,173,186 184,139,137,192 139,160,117,161 160,120,97,161 120,128,116,135 128,131,108,136
131,129 128,150,127,156 149,190,148,207 190,198,188,205 198,233,178,248 233,221,218,238 221,222 222,204,184,223 204,212,192,214 212,220,205,223
220,211,195,222 212,220,203,223 220,217,200,238 217,218 218,216,204,230 217,222,207,225 224,221,215,236 221,215 215,188,184,217 188,202,174,206
202,206,198,212 206,212,200,214 212,279,211,287 279,258,256,302 258,270,257,272 270,252,246,275 252,258,250,260 258,267,240,275 267,264 264,261
261,258 258,259,242,273 259,260,245,270 259,262,246,265 262,263,256,275 262,268,258,270 268,253,250,287 254,252,244,264 253,236,225,260 236,222,220,238
222,144,131,223 144,163,131,164 163,151,132,165 151,148,146,158 149,157 158,154 156,153 153,147 147,148,140,150 147,172,115,196
172,163,153,190 163,168,158,170 168,174,164,178 173,182,170,195 182,177,175,184 177,170,166,178 170,172 171,176 176,172 172,173
173,167,165,177 167,169 169,156,151,170 156,165,151,166 165,167 167,178,160,180 178,177,170,188 178,168 168,170,165,172 170,165
166,163,158,168 163,165 165,169 168,169,162,179 168,171,166,177 171,164,162,175 164,162,140,175 164,182,163,188 182,189,180,191 189,226,188,228
226,235,225,247 235,238`.split(/\s+/).map(c => c.split(',').map(Number));

const paths = { up: ['', ''], down: ['', ''] };
candles.forEach(([open, close, high, low], i) => {
  const x = (24.3 + 3.323 * i).toFixed(1);
  const top = Math.min(open, close), bottom = Math.max(open, close, top + 1);
  const side = paths[close < open ? 'up' : 'down'];
  side[0] += `M${x} ${high ?? top - 2}V${low ?? bottom + 2}`;
  side[1] += `M${x} ${top}V${bottom}`;
});
document.getElementById('candles').innerHTML = Object.entries(paths)
  .map(([k, [wick, stick]]) => `<path class="${k} wick" d="${wick}"/><path class="${k} stick" d="${stick}"/>`).join('');

const prices = [[17550, 64], [17500, 78], [17450, 91], [17370, 112], [17290, 134], [17210, 156], [17130, 177], [17050, 199], [16970, 221],
  [16760, 279], [16710, 293], [16660, 307], [16600, 324], [16540, 341], [16480, 358], [16420, 375], [16360, 392], [16300, 409], [16240, 426],
  [16190, 441], [16140, 455], [16090, 470], [16040, 484], [15995, 497], [15951, 510], [15908.5, 523], [15866.5, 535],
  [100, 545], [75, 559], [50, 572], [25, 586], [0, 600], [-25, 614], [-50, 628], [-75, 641], [-100, 655]];
document.getElementById('prices').innerHTML = prices
  .map(([v, y]) => `<text x="1242" y="${y + 2}">${v.toFixed(2).replace('-', '−')}</text>`).join('');

const days = ['23', '24', '25', '26', '27', '28', '29', '30', 'Dec', ...Array.from({ length: 22 }, (_, i) => String(i + 2))];
const dayX = i => Math.round(37.3 + 39.86 * i);
document.getElementById('days').innerHTML = days
  .map((d, i) => (d === '7' || d === '8') ? '' : `<text x="${dayX(i)}" y="664">${d}</text>`).join('');

const grid = prices.map(([, y]) => `M22 ${y + 0.5}H1239`).join('') + days.map((_, i) => `M${dayX(i) + 0.5} 49V656`).join('');
document.getElementById('gridlines').innerHTML = `<path d="${grid}"/>`;
document.getElementById('gridover').innerHTML = `<path d="${grid}"/>`;
```
